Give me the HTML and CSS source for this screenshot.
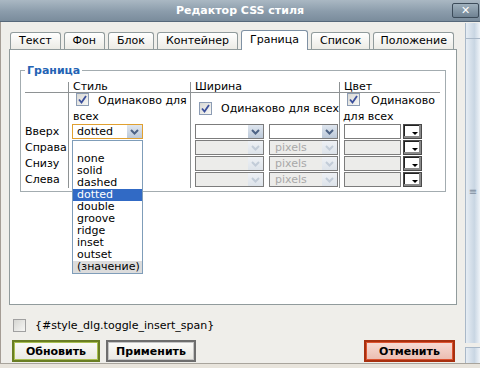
FILE: index.html
```html
<!DOCTYPE html>
<html lang="ru">
<head>
  <meta charset="UTF-8" />
  <title>Редактор CSS стиля</title>
  <link rel="stylesheet" href="styles.css">
</head>
<body>
  <div class="titlebar">
    <span></span>
    <span class="title">Редактор CSS стиля</span>
    <span class="close">✕</span>
  </div>

  <div class="frame">
    <div class="dialog">
      <div class="tabs">
        <span class="tab">Текст</span>
        <span class="tab">Фон</span>
        <span class="tab">Блок</span>
        <span class="tab">Контейнер</span>
        <span class="tab active">Граница</span>
        <span class="tab">Список</span>
        <span class="tab">Положение</span>
      </div>

      <div class="panel">
        <fieldset class="group">
          <legend>Граница</legend>
          <div class="border-grid">
            <div class="cell head"></div>
            <div class="cell head col">Стиль</div>
            <div class="cell head col">Ширина</div>
            <div class="cell head col">Цвет</div>

            <div class="cell"></div>
            <div class="cell col same same-style">
              <span class="chk checked"><svg width="9" height="9" viewBox="0 0 9 9"><path d="M1 4.5 L3.5 7.5 L8 1" fill="none" stroke="#3b4f9c" stroke-width="1.8"/></svg></span>Одинаково для<br>всех
            </div>
            <div class="cell col same same-width">
              <span class="chk checked"><svg width="9" height="9" viewBox="0 0 9 9"><path d="M1 4.5 L3.5 7.5 L8 1" fill="none" stroke="#3b4f9c" stroke-width="1.8"/></svg></span>Одинаково для всех
            </div>
            <div class="cell col same same-color">
              <span class="chk checked"><svg width="9" height="9" viewBox="0 0 9 9"><path d="M1 4.5 L3.5 7.5 L8 1" fill="none" stroke="#3b4f9c" stroke-width="1.8"/></svg></span>Одинаково<br>для всех
            </div>

            <div class="cell label">Вверх</div>
            <div class="cell col style-cell">
              <div class="sel sel-style focus">
                <span class="val">dotted</span>
                <span class="arrow"><svg width="9" height="6" viewBox="0 0 9 6"><path d="M1 1 L4.5 4.5 L8 1" fill="none" stroke="#4d6385" stroke-width="2"/></svg></span>
                <ul class="droplist">
                  <li>&nbsp;</li>
                  <li>none</li>
                  <li>solid</li>
                  <li>dashed</li>
                  <li class="hl">dotted</li>
                  <li>double</li>
                  <li>groove</li>
                  <li>ridge</li>
                  <li>inset</li>
                  <li>outset</li>
                  <li class="custom">(значение)</li>
                </ul>
              </div>
            </div>
            <div class="cell col width-cell">
              <div class="sel sel-width"><span class="val"></span><span class="arrow"><svg width="9" height="6" viewBox="0 0 9 6"><path d="M1 1 L4.5 4.5 L8 1" fill="none" stroke="#4d6385" stroke-width="2"/></svg></span></div>
              <div class="sel sel-width"><span class="val"></span><span class="arrow"><svg width="9" height="6" viewBox="0 0 9 6"><path d="M1 1 L4.5 4.5 L8 1" fill="none" stroke="#4d6385" stroke-width="2"/></svg></span></div>
            </div>
            <div class="cell col color-cell">
              <span class="field"></span><span class="picker"></span>
            </div>

            <div class="cell label">Справа</div>
            <div class="cell col"></div>
            <div class="cell col width-cell">
              <div class="sel sel-width off"><span class="val"></span><span class="arrow"><svg width="9" height="6" viewBox="0 0 9 6"><path d="M1 1 L4.5 4.5 L8 1" fill="none" stroke="#c2ccd8" stroke-width="2"/></svg></span></div>
              <div class="sel sel-width off"><span class="val">pixels</span><span class="arrow"><svg width="9" height="6" viewBox="0 0 9 6"><path d="M1 1 L4.5 4.5 L8 1" fill="none" stroke="#c2ccd8" stroke-width="2"/></svg></span></div>
            </div>
            <div class="cell col color-cell">
              <span class="field off"></span><span class="picker"></span>
            </div>

            <div class="cell label">Снизу</div>
            <div class="cell col"></div>
            <div class="cell col width-cell">
              <div class="sel sel-width off"><span class="val"></span><span class="arrow"><svg width="9" height="6" viewBox="0 0 9 6"><path d="M1 1 L4.5 4.5 L8 1" fill="none" stroke="#c2ccd8" stroke-width="2"/></svg></span></div>
              <div class="sel sel-width off"><span class="val">pixels</span><span class="arrow"><svg width="9" height="6" viewBox="0 0 9 6"><path d="M1 1 L4.5 4.5 L8 1" fill="none" stroke="#c2ccd8" stroke-width="2"/></svg></span></div>
            </div>
            <div class="cell col color-cell">
              <span class="field off"></span><span class="picker"></span>
            </div>

            <div class="cell label">Слева</div>
            <div class="cell col"></div>
            <div class="cell col width-cell">
              <div class="sel sel-width off"><span class="val"></span><span class="arrow"><svg width="9" height="6" viewBox="0 0 9 6"><path d="M1 1 L4.5 4.5 L8 1" fill="none" stroke="#c2ccd8" stroke-width="2"/></svg></span></div>
              <div class="sel sel-width off"><span class="val">pixels</span><span class="arrow"><svg width="9" height="6" viewBox="0 0 9 6"><path d="M1 1 L4.5 4.5 L8 1" fill="none" stroke="#c2ccd8" stroke-width="2"/></svg></span></div>
            </div>
            <div class="cell col color-cell">
              <span class="field off"></span><span class="picker"></span>
            </div>
          </div>
        </fieldset>
      </div>

      <label class="insert-span"><span class="chk plain"></span>{#style_dlg.toggle_insert_span}</label>

      <div class="buttons">
        <button class="btn btn-update">Обновить</button>
        <button class="btn btn-apply">Применить</button>
        <button class="btn btn-cancel">Отменить</button>
      </div>
    </div>

    <div class="scroll">
      <span class="sb-btn"></span>
      <span class="sb-track"><span class="grip">≡</span></span>
      <span class="sb-btn bottom"></span>
    </div>
  </div>

  <div class="statusbar"></div>
</body>
</html>
```

FILE: styles.css
```css
body {
  margin: 0;
  width: 480px;
  height: 368px;
  overflow: hidden;
  background-color: #efeeea;
  color: #000;
  font-family: "DejaVu Sans", Verdana, sans-serif;
  font-size: 11px;
}
.titlebar {
  height: 22px;
  box-sizing: border-box;
  display: grid;
  grid-template-columns: 1fr auto 1fr;
  align-items: center;
  background: linear-gradient(#aab8c3, #8b9cab 55%, #7a8c9c);
  border-bottom: 1px solid #56687a;
  color: #fff;
  font-weight: bold;
}
.close {
  justify-self: end;
  width: 25px;
  height: 13px;
  margin-right: 1px;
  border: 1px solid #3d4c5a;
  border-radius: 2px;
  background: linear-gradient(#9fb0bd, #6f8292);
  font-size: 11px;
  line-height: 13px;
  text-align: center;
}
.frame {
  display: flex;
  height: 341px;
  border-left: 1px solid #a59d95;
}
.dialog {
  width: 464px;
  box-sizing: border-box;
  padding: 8px 8px 0 8px;
}
.tabs {
  display: flex;
  align-items: flex-end;
  gap: 3px;
  height: 19px;
  margin-left: 1px;
}
.tab {
  height: 16px;
  line-height: 16px;
  padding: 0 8px;
  border: 1px solid #919b9c;
  border-bottom: none;
  border-radius: 3px 3px 0 0;
  background: linear-gradient(#ffffff, #ecebe5);
}
.tab:last-child {
  padding: 0 6px;
}
.tab.active {
  position: relative;
  z-index: 1;
  height: 19px;
  margin-bottom: -1px;
  line-height: 18px;
  background: #fff;
  border-color: #7f91a4;
}
.panel {
  height: 256px;
  box-sizing: border-box;
  border: 1px solid #919b9c;
  background-color: #fff;
}
.group {
  width: 426px;
  box-sizing: border-box;
  margin: 14px 0 0 10px;
  padding: 5px 3px 3px 4px;
  border: 1px solid #a3acb0;
}
.group legend {
  padding: 0 2px;
  line-height: 13px;
  color: #2463b4;
  font-weight: bold;
}
.border-grid {
  display: grid;
  grid-template-columns: 43px 122px 149px 101px;
  grid-template-rows: 11px 31px 16px 16px 16px 16px;
}
.cell {
  box-sizing: border-box;
}
.col {
  border-left: 1px solid #8e9294;
}
.head {
  line-height: 10px;
  border-bottom: 1px solid #8e9294;
  padding-left: 4px;
}
.same {
  line-height: 16px;
  padding-left: 4px;
}
.same-style .chk {
  margin: 0 9px 0 3px;
}
.same-width {
  display: flex;
  align-items: center;
}
.same-width .chk {
  margin: 0 9px 0 4px;
}
.same-color {
  padding-left: 3px;
}
.same-color .chk {
  margin: 0 11px 0 4px;
}
.chk {
  display: inline-block;
  width: 11px;
  height: 11px;
  border: 1px solid #8c9cb4;
  background: linear-gradient(135deg, #d8d8d4, #f8f8f6);
  vertical-align: -2px;
}
.chk svg {
  display: block;
  margin: 1px;
}
.label {
  line-height: 15px;
}
.style-cell {
  padding-left: 3px;
}
.width-cell {
  display: flex;
  gap: 5px;
  padding-left: 4px;
}
.color-cell {
  display: flex;
  gap: 2px;
  padding-left: 4px;
}
.sel {
  position: relative;
  height: 15px;
  box-sizing: border-box;
  border: 1px solid #7c7c7c;
  background: #fff;
  display: flex;
}
.sel-style {
  width: 71px;
}
.sel-width {
  width: 69px;
}
.sel.focus {
  border-color: #e0a030;
}
.sel.off {
  background: #ececea;
}
.val {
  flex: 1;
  padding-left: 4px;
  line-height: 13px;
}
.sel.off .val {
  color: #a8a8a8;
  padding-left: 5px;
}
.arrow {
  width: 15px;
  height: 13px;
  display: flex;
  align-items: center;
  justify-content: center;
  background: linear-gradient(#dfe6ef, #bcc9d9);
}
.sel.off .arrow {
  background: linear-gradient(#eef1f5, #dde3ea);
}
.droplist {
  position: absolute;
  left: -1px;
  top: 15px;
  z-index: 2;
  width: 71px;
  box-sizing: border-box;
  margin: 0;
  padding: 0;
  list-style: none;
  border: 1px solid #7f9db9;
  background: #fff;
}
.droplist li {
  height: 12px;
  line-height: 12px;
  padding-left: 4px;
}
.droplist .hl {
  background-color: #316ac5;
  color: #fff;
}
.droplist .custom {
  background-color: #dcdcdc;
}
.field {
  width: 57px;
  height: 15px;
  box-sizing: border-box;
  border: 1px solid #7c7c7c;
  background: #fff;
}
.field.off {
  background: #ececea;
}
.picker {
  position: relative;
  width: 19px;
  height: 15px;
  box-sizing: border-box;
  border: 1px solid #4a4a4a;
  box-shadow: inset -2px -2px 0 #8a8a8a, inset 1px 1px 0 #222;
  background: #fff;
}
.picker::after {
  content: "";
  position: absolute;
  right: 3px;
  bottom: 3px;
  border-top: 3px solid #000;
  border-left: 3px solid transparent;
  border-right: 3px solid transparent;
}
.insert-span {
  display: flex;
  align-items: center;
  margin: 14px 0 0 4px;
  height: 13px;
}
.chk.plain {
  border-color: #a0a0a0;
  background: linear-gradient(135deg, #d6d6d2, #f6f6f4);
  margin-right: 9px;
}
.buttons {
  display: flex;
  gap: 6px;
  margin: 8px 2px 0 3px;
}
.btn {
  height: 22px;
  padding: 0;
  font-family: inherit;
  font-size: 11px;
  font-weight: bold;
  color: #000;
  border: 2px solid #6e6e6e;
  box-shadow: inset 0 0 0 1px #c4c4c4;
  background: linear-gradient(#fbfbf9, #e9e8e2);
  cursor: pointer;
}
.btn-update {
  width: 88px;
  border-color: #6a7e24;
  box-shadow: inset 0 0 0 1px #a9bf52;
}
.btn-apply {
  width: 90px;
}
.btn-cancel {
  width: 91px;
  margin-left: auto;
  border-color: #a8300f;
  box-shadow: inset 0 0 0 1px #dd5230;
  background: linear-gradient(#f7dcd5, #ebbcb0);
}
.scroll {
  width: 15px;
  display: flex;
  flex-direction: column;
  padding-top: 1px;
}
.sb-btn {
  height: 16px;
  box-sizing: border-box;
  border-left: 1px solid #a9b8c8;
  border-bottom: 1px solid #a9b8c8;
  background: linear-gradient(to right, #e6edf4, #c9d6e3 60%, #eef3f8);
}
.sb-btn.bottom {
  margin-top: 4px;
  border-top: 1px solid #a9b8c8;
  border-bottom: none;
}
.sb-track {
  flex: 1;
  display: flex;
  align-items: center;
  justify-content: center;
  border-left: 1px solid #a9b8c8;
  background: linear-gradient(to right, #e6edf4, #c9d6e3 60%, #eef3f8);
  color: #7f8fa0;
  font-size: 10px;
}
.statusbar {
  height: 5px;
  box-sizing: border-box;
  border-top: 1px solid #a8a49c;
  background-color: #e8e4dc;
}
```
